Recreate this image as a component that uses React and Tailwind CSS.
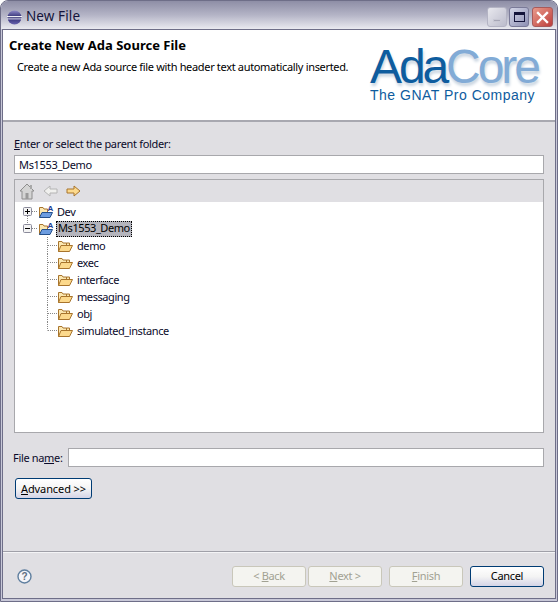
import React from 'react';

const FONT = "font-['Noto_Sans',sans-serif]";

const Eclipse = () => (
    <svg width="15" height="15" viewBox="0 0 16 16">
        <defs>
            <linearGradient id="ec" x1="0" y1="0" x2="0" y2="1">
                <stop offset="0" stopColor="#8f8ac8" />
                <stop offset="0.5" stopColor="#2c2a6e" />
                <stop offset="1" stopColor="#6a64b0" />
            </linearGradient>
        </defs>
        <circle cx="8" cy="8" r="7.5" fill="url(#ec)" />
        <rect x="0" y="6.5" width="16" height="1.2" fill="#fff" />
        <rect x="0" y="9" width="16" height="1" fill="#e8e8f4" />
    </svg>
);

const WinBtn = ({ className, children }) => (
    <div className={`h-[20px] rounded-[3px] border flex items-center justify-center ${className}`}>
        {children}
    </div>
);

const TitleBar = () => (
    <div className="h-[28px] shrink-0 flex items-center pl-[6px] pr-[4px] pt-[4px] rounded-t-[7px] bg-gradient-to-b from-[#8e8ea6] via-[#b4b4c6] to-[#eaeaf0]">
        <Eclipse />
        <span className="ml-[4px] text-[13.5px] tracking-[0.1px] text-[#14143a] leading-none">New File</span>
        <div className="ml-auto flex">
            <WinBtn className="w-[20px] border-[#b4b4c4] bg-gradient-to-br from-[#e8e8ee] to-[#bcbccc] items-end pb-[4px]">
                <div className="w-[8px] h-[3px] bg-[#a6a6b6] border border-[#c8c8d4]" />
            </WinBtn>
            <WinBtn className="w-[20px] ml-[2px] border-[#7a7a98] bg-gradient-to-br from-[#d4d6e6] to-[#8e90b4]">
                <div className="w-[11px] h-[10px] border border-[#14143a] border-t-[3px]" />
            </WinBtn>
            <WinBtn className="w-[21px] ml-[3px] border-[#a85a5a] bg-gradient-to-br from-[#e89a8c] to-[#bc3c3c]">
                <svg width="13" height="13" viewBox="0 0 13 13">
                    <path d="M2 2 L11 11 M11 2 L2 11" stroke="#fff" strokeWidth="2.4" strokeLinecap="square" />
                </svg>
            </WinBtn>
        </div>
    </div>
);

const Logo = () => (
    <div className="flex flex-col shrink-0 mt-[15px] mr-[17px] w-[168px] whitespace-nowrap font-['Liberation_Sans',sans-serif]">
        <div className="text-[48px] leading-[44px] tracking-[-3.1px] [text-shadow:1px_3px_3px_#c8d4e0]">
            <span className="text-[#0e5c9e]">Ada</span>
            <span className="text-[#82abd6]">Core</span>
        </div>
        <div className="text-[14px] leading-[16px] -mt-[2px] tracking-[0.5px] text-[#0e5c9e]">The GNAT Pro Company</div>
    </div>
);

const Header = () => (
    <div className="h-[92px] shrink-0 bg-white border-b-2 border-[#a8a8b0] flex justify-between pl-[6px]">
        <div>
            <div className="mt-[7px] text-[13px] tracking-normal font-bold leading-[17px] text-black">Create New Ada Source File</div>
            <div className="mt-[5px] ml-[8px] text-[11px] leading-[16px] text-black">
                Create a new Ada source file with header text automatically inserted.
            </div>
        </div>
        <Logo />
    </div>
);

const Home = () => (
    <svg width="16" height="17" viewBox="0 0 16 17" fill="none">
        <path d="M8 1 L15 8 H13 V16 H3 V8 H1 Z" fill="#d4d4d4" stroke="#8e8e8e" />
        <rect x="6.5" y="10" width="3" height="6" fill="#9a9a9a" />
        <rect x="11" y="2" width="2" height="4" fill="#a8a8a8" />
    </svg>
);

const Arrow = ({ left, fill, stroke }) => (
    <svg width="15" height="12" viewBox="0 0 15 12" className={left ? '-scale-x-100' : ''}>
        <path d="M1 4 H8 V1 L14 6 L8 11 V8 H1 Z" fill={fill} stroke={stroke} />
    </svg>
);

const Folder = ({ project }) => (
    <svg width="16" height="16" viewBox="0 0 16 16" className="shrink-0">
        <path d="M1.5 3.5 H5 L6 5 H9.5 V13.5 H1.5 Z" fill="#fbe7b0" stroke="#a8742c" />
        {!project && <path d="M9.5 5 H12.5 V8 H9.5 Z" fill="#fbe7b0" stroke="#a8742c" />}
        {project ? (
            <>
                <path d="M1.5 13.5 L4 8.5 H14.5 L12 13.5 Z" fill="#6c9ce0" stroke="#24508c" />
                <text x="9.5" y="7" fontSize="8" fontWeight="700" fill="#1c3c94" fontFamily="Liberation Sans">A</text>
            </>
        ) : (
            <path d="M1.5 13.5 L4 7.5 H15.5 L12.5 13.5 Z" fill="#fcd98c" stroke="#a8742c" />
        )}
    </svg>
);

const Expander = ({ open }) => (
    <svg width="23" height="17" viewBox="0 0 23 17" className="shrink-0">
        {!open && <line x1="12.5" y1="13" x2="12.5" y2="17" stroke="#888" strokeDasharray="1 1" />}
        {open && <line x1="12.5" y1="0" x2="12.5" y2="4" stroke="#888" strokeDasharray="1 1" />}
        <line x1="17" y1="8.5" x2="23" y2="8.5" stroke="#888" strokeDasharray="1 1" />
        <rect x="8.5" y="4.5" width="8" height="8" rx="1" fill="#f4f4f4" stroke="#8a8a9a" />
        <line x1="10" y1="8.5" x2="15" y2="8.5" stroke="#000" />
        {!open && <line x1="12.5" y1="6" x2="12.5" y2="11" stroke="#000" />}
    </svg>
);

const Connector = ({ last }) => (
    <svg width="42" height="17" viewBox="0 0 42 17" className="shrink-0">
        <line x1="32.5" y1="0" x2="32.5" y2={last ? 8.5 : 17} stroke="#888" strokeDasharray="1 1" />
        <line x1="33" y1="8.5" x2="42" y2="8.5" stroke="#888" strokeDasharray="1 1" />
    </svg>
);

const CHILDREN = ['demo', 'exec', 'interface', 'messaging', 'obj', 'simulated_instance'];

const Tree = () => (
    <div className="h-[254px] mt-[5px] mx-[11px] border border-[#a8a8ac] bg-white">
        <div className="h-[22px] bg-[#e0dfe3] flex items-center pl-[4px] gap-[8px]">
            <Home />
            <Arrow left fill="#f0f0ee" stroke="#b4b4b4" />
            <Arrow fill="#fcd98c" stroke="#a8742c" />
        </div>
        <div className="pt-[1px] text-[11px] tracking-[-0.42px] text-[#0a0a2a]">
            <div className="flex items-center h-[17px]">
                <Expander />
                <Folder project />
                <span className="ml-[3px] leading-none">Dev</span>
            </div>
            <div className="flex items-center h-[17px]">
                <Expander open />
                <Folder project />
                <span className="ml-[2px] px-[1px] h-[16px] flex items-center bg-[#b4b4bc] border border-dotted border-black text-black">Ms1553_Demo</span>
            </div>
            {CHILDREN.map((name, i) => (
                <div key={name} className="flex items-center h-[17px]">
                    <Connector last={i === CHILDREN.length - 1} />
                    <Folder />
                    <span className="ml-[4px] leading-none">{name}</span>
                </div>
            ))}
        </div>
    </div>
);

const Btn = ({ children, disabled, className = '' }) => (
    <div
        className={`h-[21px] rounded-[3px] border flex items-center justify-center pt-[1px] text-[11px] ${
            disabled
                ? 'border-[#c9c7ba] bg-[#f4f4f0] text-[#a1a192]'
                : 'border-[#003c74] bg-gradient-to-b from-white via-[#f4f4f4] to-[#d4d4e6] text-black'
        } ${className}`}
    >
        {children}
    </div>
);

const Help = () => (
    <svg width="15" height="15" viewBox="0 0 15 15">
        <circle cx="7.5" cy="7.5" r="6.5" fill="#f4f4f8" stroke="#5f7f9f" strokeWidth="1.4" />
        <text x="7.5" y="11" textAnchor="middle" fontSize="10" fontWeight="700" fill="#5f6f80" fontFamily="Liberation Sans">?</text>
    </svg>
);

export default function App() {
    return (
        <div className={`w-[558px] h-[602px] flex flex-col rounded-t-[8px] border border-[#6e6e88] bg-[#c8c8d8] overflow-hidden tracking-[-0.33px] ${FONT}`}>
            <TitleBar />
            <div className="flex-1 mx-[1px] mb-[2px] border border-[#6e6e88] bg-[#e0dfe3] flex flex-col text-[#0a0a2a]">
                <Header />
                <div className="mt-[14px] ml-[11px] text-[11px] leading-[16px]">
                    <u>E</u>nter or select the parent folder:
                </div>
                <div className="h-[19px] mt-[3px] mx-[11px] border border-[#a8a8ac] bg-white text-[11px] flex items-center pl-[4px] pt-[1px]">
                    Ms1553_Demo
                </div>
                <Tree />
                <div className="flex items-center mt-[15px] pl-[10px] pr-[11px]">
                    <span className="w-[55px] text-[11px] pt-[1px]">File na<u>m</u>e:</span>
                    <div className="flex-1 h-[19px] border border-[#a8a8ac] bg-white" />
                </div>
                <Btn className="w-[77px] mt-[11px] ml-[12px] text-[#0a0a2a] tracking-[-0.1px]">
                    <span><u>A</u>dvanced &gt;&gt;</span>
                </Btn>
                <div className="mt-auto border-t border-[#a0a0a8] shadow-[inset_0_1px_0_#f4f4f6] h-[47px] flex items-center pl-[14px] pr-[11px] pt-[2px]">
                    <Help />
                    <div className="ml-auto flex items-center">
                        <Btn disabled className="w-[74px]"><span>&lt; <u>B</u>ack</span></Btn>
                        <Btn disabled className="w-[74px] ml-[2px]"><span><u>N</u>ext &gt;</span></Btn>
                        <Btn disabled className="w-[74px] ml-[7px]"><span><u>F</u>inish</span></Btn>
                        <Btn className="w-[74px] ml-[7px]">Cancel</Btn>
                    </div>
                </div>
            </div>
        </div>
    );
}
